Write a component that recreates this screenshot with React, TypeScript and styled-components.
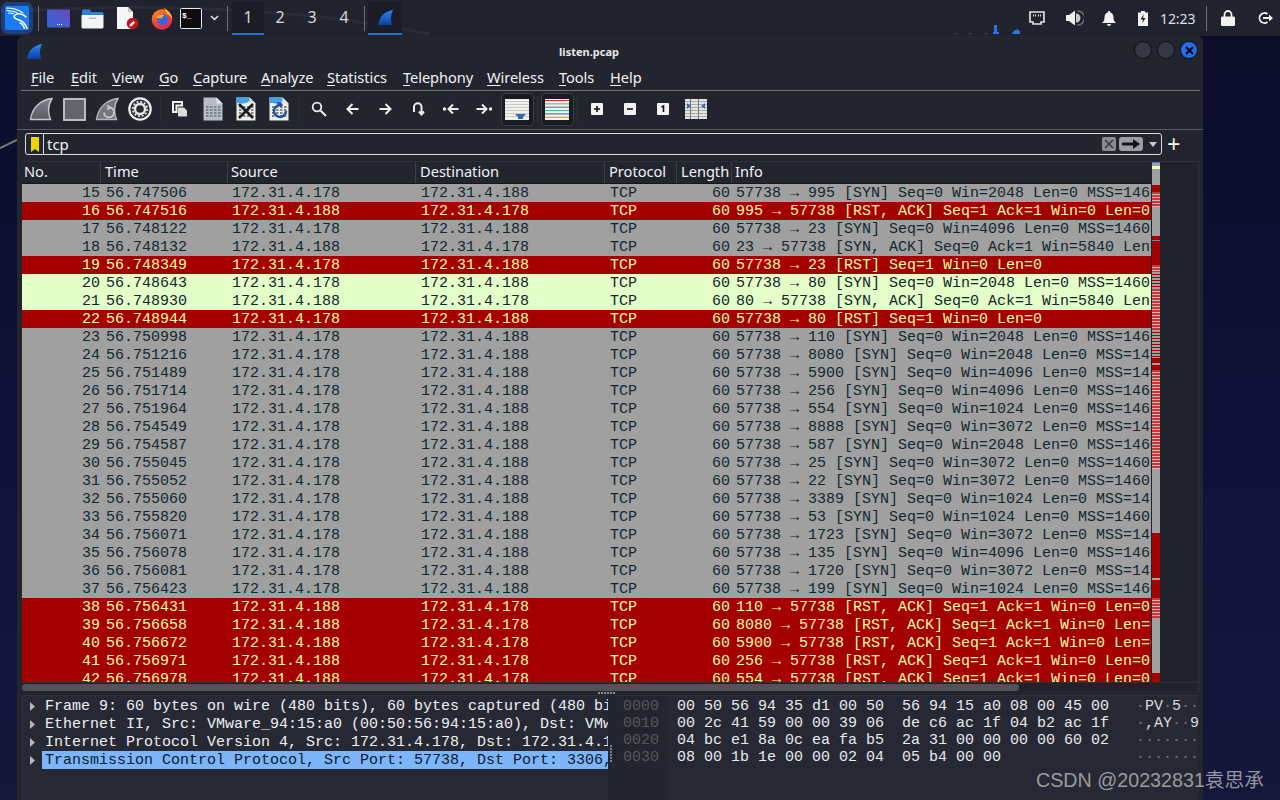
import React from "react";
import styled, { createGlobalStyle } from "styled-components";

const Global = createGlobalStyle`
  html, body { margin: 0; padding: 0; background: #0c0e2c; }
  * { box-sizing: border-box; }
`;
const MONO = `"Liberation Mono", monospace`;
const SANS = `"Noto Sans", sans-serif`;

const Page = styled.div`
  position: relative; width: 1280px; height: 800px; overflow: hidden;
  display: flex; flex-direction: column; font-family: ${SANS};
  background: linear-gradient(180deg, #0b0d28 0%, #10123a 60%, #14163a 100%);
`;
const TopBar = styled.header`
  position: relative; height: 36px; flex: none; display: flex; align-items: center;
  background: #20222e; color: #eef0f4;
`;
const Streak = styled.svg`position: absolute; left: 0; top: 0; pointer-events: none;`;
const Launcher = styled.div`
  position: relative; width: ${p => p.$w}px; height: 34px; flex: none; display: flex; align-items: center; justify-content: center;
`;
const BarSep = styled.div`
  position: relative; width: 1px; height: 25px; background: #6f7279; flex: none; margin: 0 ${p => p.$r}px 0 ${p => p.$l}px;
`;
const Workspace = styled.div`
  position: relative; width: 32px; height: 34px; flex: none; display: flex; align-items: center; justify-content: center;
  font-size: 16px; color: #d5d8de; margin-top: 0;
  background: ${p => (p.$on ? "#1a1c26" : "transparent")};
  border-bottom: 2px solid ${p => (p.$on ? "#2a6fd6" : "transparent")};
`;
const TaskButton = styled(Workspace)`width: 34px;`;
const Spacer = styled.div`flex: 1;`;
const Tray = styled.div`position: relative; width: 28px; height: 34px; display: flex; align-items: center; justify-content: center; flex: none; margin-right: ${p => p.$r ?? 7}px;`;
const Clock = styled.div`position: relative; font-size: 14px; color: #d9e0ea; width: 37px; flex: none; letter-spacing: -.1px;`;
const Net = styled.svg`position: absolute; left: 955px; top: 24px;`;

const Desktop = styled.main`flex: 1; padding-left: 17px; min-height: 0; display: flex;`;
const Win = styled.section`
  width: 1186px; height: 764px; background: #22252e; border-radius: 6px 6px 0 0;
  display: flex; flex-direction: column; color: #eef0f4;
`;
const TitleBar = styled.div`
  position: relative; height: 28px; flex: none; display: flex; align-items: center; justify-content: center;
  font-size: 11px; font-weight: 700; color: #e6e8ec; padding: 2px 42px 0 0;
`;
const TitleIcon = styled.div`position: absolute; left: 9px; top: 7px;`;
const WinButtons = styled.div`position: absolute; right: 5px; top: 5px; display: flex; gap: 5px;`;
const WinBtn = styled.div`
  width: 18px; height: 18px; border-radius: 50%; border: 1px solid #0d0e12;
  background: ${p => (p.$close ? "#1f6ff0" : "#343844")};
  display: flex; align-items: center; justify-content: center;
`;
const MenuBar = styled.nav`
  height: 27px; flex: none; margin: 0 3px 0 4px; border-bottom: 1px solid #70737a; padding-left: 10px;
  display: flex; align-items: center; gap: 0;
`;
const MenuItem = styled.span`font-size: 14.6px; width: ${p => p.$w}px; flex: none; color: #f0f2f5; letter-spacing: -.05px; line-height: 22px;`;
const Mn = styled.span`text-decoration: underline; text-underline-offset: 2px; text-decoration-thickness: 1px;`;
const ToolBar = styled.div`
  height: 38px; flex: none; display: flex; align-items: center; padding: 0 0 2px 7.5px;
  margin: 0 3px 0 0;
`;
const Tool = styled.div`
  width: 33px; height: 33px; flex: none; display: flex; align-items: center; justify-content: center;
  border-radius: 4px; border: ${p => (p.$on ? "1px solid #3b3f4a" : "1px solid transparent")};
  background: ${p => (p.$on ? "#191b22" : "transparent")};
`;
const ToolSep = styled.div`width: 7px; height: 26px; flex: none; display: flex; justify-content: center;
  &::after { content: ""; width: 1px; background: #2c2f38; }
`;
const FilterWrap = styled.div`
  height: 32px; flex: none; border-top: 1px solid #585b63; display: flex; align-items: center; padding: 0 0 3px 8px; gap: 4px;
`;
const Filter = styled.div`
  width: 1137px; height: 22px; border: 1px solid #d8dadf; border-radius: 3px; display: flex; align-items: center; background: #22252e;
`;
const Bookmark = styled.div`width: 18px; height: 20px; border-right: 1px solid #d8dadf; display: flex; align-items: center; justify-content: center; flex: none;`;
const FilterText = styled.div`flex: 1; font-size: 15px; padding-left: 3px; color: #f2f3f5; line-height: 20px;`;
const FilterBtns = styled.div`display: flex; align-items: center; gap: 3px; padding-right: 2px;`;
const ClearBtn = styled.div`width: 14px; height: 14px; border-radius: 2px; background: #8a8d90; display: flex; align-items: center; justify-content: center;`;
const ApplyBtn = styled.div`width: 24px; height: 14px; border-radius: 3px; background: #9a9da3; display: flex; align-items: center; justify-content: center;`;
const Drop = styled.div`width: 13px; display: flex; justify-content: center;`;
const Plus = styled.div`font-size: 23px; line-height: 20px; color: #f0f2f5; margin-left: 1px; font-weight: 400; font-family: "Liberation Sans", sans-serif;`;

const ListFrame = styled.div`
  height: 530px; flex: none; margin: 0 4px 0 5px; display: flex; flex-direction: column;
  background: #1f222b; border-top: 1px solid #2d3039; border-right: 1px solid #2d3039;
`;
const ListMain = styled.div`flex: 1; min-height: 0; display: flex;`;
const ListCol = styled.div`width: 1129px; flex: none; display: flex; flex-direction: column; min-height: 0;`;
const cols = "79px 127px 188px 189px 72px 55px 419px";
const Header = styled.div`
  height: 22px; flex: none; display: grid; grid-template-columns: ${cols}; background: #22252e;
  border-bottom: 1px solid #15171d;
`;
const HeadCell = styled.div`
  font-size: 14.6px; color: #f0f2f5; padding-left: ${p => p.$p}px; border-right: 1px solid #3c3f48; line-height: 19px;
  white-space: nowrap; &:last-child { border-right: 0; }
`;
const Rows = styled.div`flex: 1; min-height: 0; overflow: hidden;`;
const palette = {
  g: { bg: "#a0a0a0", fg: "#12272e" },
  r: { bg: "#a40000", fg: "#fffc9c" },
  l: { bg: "#e4ffc7", fg: "#12272e" },
};
const Row = styled.div`
  height: 18px; display: grid; grid-template-columns: ${cols};
  background: ${p => palette[p.$k].bg}; color: ${p => palette[p.$k].fg};
  font: 15px/19px ${MONO}; white-space: pre;
`;
const Cell = styled.div`
  padding-left: ${p => p.$p ?? 0}px; padding-right: ${p => p.$r ?? 0}px; text-align: ${p => (p.$end ? "right" : "left")}; overflow: hidden;
`;
const MapSvg = styled.svg`flex: none; margin-left: 1px; display: block; margin-top: 0;`;
const HScroll = styled.div`height: 9px; flex: none; display: flex; align-items: center; border-top: 1px solid #2d3039;`;
const HThumb = styled.div`width: 997px; height: 7px; border-radius: 4px; background: #50535a;`;
const Grip = styled.div`
  height: 4px; flex: none; display: flex; justify-content: center; align-items: center; padding-right: 6px;
`;
const GripDots = styled.div`width: 18px; height: 2px; background: repeating-linear-gradient(90deg, #8b8e94 0 2px, transparent 2px 3px);`;
const Bottom = styled.div`flex: 1; min-height: 0; display: flex; margin: 0 4px 0 5px;`;
const Tree = styled.div`
  position: relative; width: 586px; flex: none; border: 1px solid #2d3039; border-width: 1px 0 0 1px; padding-top: 1px; background: #262934;
`;
const TreeRow = styled.div`display: flex; height: 18px; align-items: center;`;
const Twisty = styled.div`width: 19px; flex: none; display: flex; justify-content: center;`;
const TreeText = styled.div`
  width: 566px; height: 18px; padding-left: 3px; overflow: hidden; white-space: pre; font: 15px/19px ${MONO};
  color: ${p => (p.$sel ? "#0e1a2a" : "#eef0f4")}; background: ${p => (p.$sel ? "#7cb5f9" : "transparent")};
`;
const VSplit = styled.div`width: 5px; flex: none; display: flex; justify-content: center; padding-top: 50px;`;
const VDots = styled.div`width: 2px; height: 17px; background: repeating-linear-gradient(180deg, #7f828a 0 2px, transparent 2px 3px);`;
const Hex = styled.div`
  flex: 1; min-width: 0; display: flex; border-top: 1px solid #2d3039; background: #262934; font: 15px/17px ${MONO}; white-space: pre; overflow: hidden; padding-left: 0;
`;
const Offsets = styled.div`width: 55px; flex: none; background: #22252e; color: #54575e; padding: 2px 0 0 10px;`;
const Bytes = styled.div`width: 468px; flex: none; padding: 2px 0 0 9px; color: #e8eaee;`;
const Ascii = styled.div`flex: 1; padding-top: 2px; color: #d8dade; overflow: hidden;`;
const Dim = styled.span`color: #6d7078;`;
const Mark = styled.div`
  position: absolute; left: 1036px; top: 766px; font: 19.7px/28px "Liberation Sans", "Noto Sans CJK SC", sans-serif; color: rgba(200,200,200,.72); white-space: nowrap;
`;
const Wall = styled.svg`position: absolute; left: 0; top: 36px;`;

const Fin = ({ s = 24, a = "#2f86ee", b = "#0b3f9e", edge = "none" }: any) => {
  const id = `f${a.slice(1)}`;
  return (
    <svg width={s} height={s} viewBox="0 0 24 24">
      <defs><linearGradient id={id} x1="0" y1="0" x2="0" y2="1"><stop offset="0" stopColor={a} /><stop offset="1" stopColor={b} /></linearGradient></defs>
      <path d="M1.500 22.500C3 11 11 3 23 1.500 19.500 7 18.500 15 21.500 22.500Z" fill={`url(#${id})`} stroke={edge} strokeWidth="1.400" />
    </svg>
  );
};
const Kali = () => (
  <svg width="34" height="34" viewBox="0 0 34 34">
    <rect x="1" y="1" width="32" height="32" rx="7" fill="#1b6ee8" opacity=".4" />
    <rect x="5" y="5" width="24" height="24" rx="2" fill="#1a7bf5" />
    <path d="M6.500 7C12 7 19 9 23 12M7 9.500c3 .2 7 .8 10 2M8.500 12c2 0 3.500.2 5 .8" fill="none" stroke="#fff" strokeWidth="1.100" strokeLinecap="round" />
    <path d="M26 16C23 12.500 18 12 15 14c-2 1.500-.5 3.500 2 4.200 4.500 1 8 3 10 9.300M20 22c2 .6 3.500 2.500 4.300 5.300" fill="none" stroke="#fff" strokeWidth="1.500" strokeLinecap="round" />
  </svg>
);
const ShowDesk = () => (
  <svg width="23" height="19" viewBox="0 0 23 19">
    <defs><linearGradient id="sd" x1="0" y1="1" x2="1" y2="0"><stop offset="0" stopColor="#2f66e0" /><stop offset="1" stopColor="#6a4bb8" /></linearGradient></defs>
    <rect width="23" height="18" y=".5" rx="1" fill="url(#sd)" />
    <path d="M10 15h1v1h-1zM12 15h1v1h-1zM14 15h1v1h-1z" fill="#fff" />
  </svg>
);
const Folder = () => (
  <svg width="23" height="21" viewBox="0 0 23 21">
    <path d="M1 3a1.500 1.500 0 0 1 1.500-1.500h6l2 2.500H21a1.500 1.500 0 0 1 1.500 1.500V7H1z" fill="#2d7fe0" />
    <path d="M.5 7h22v12a1.500 1.500 0 0 1-1.500 1.500H2A1.500 1.500 0 0 1 .5 19z" fill="#f4f4f4" />
    <rect x="8" y="9.500" width="7" height="1.500" fill="#bbb" />
  </svg>
);
const DocBad = () => (
  <svg width="24" height="24" viewBox="0 0 24 24">
    <path d="M2 1h11l5 5v17H2z" fill="#f6f6f6" />
    <path d="M13 1v5h5z" fill="#c8c8c8" />
    <circle cx="17.500" cy="17.500" r="5.800" fill="#c8141c" />
    <path d="M14.500 20.500l.6-2.200 3.400-3.400 1.600 1.600-3.400 3.400z" fill="#fff" />
  </svg>
);
const Firefox = () => (
  <svg width="22" height="23" viewBox="0 0 22 23">
    <defs><linearGradient id="ff" x1="0" y1="0" x2=".6" y2="1"><stop offset="0" stopColor="#ff9a2a" /><stop offset=".55" stopColor="#f0472f" /><stop offset="1" stopColor="#d92b55" /></linearGradient></defs>
    <circle cx="11" cy="12.500" r="10.300" fill="url(#ff)" />
    <path d="M12 .8c4.500 2 9 6 9.300 11.700-1-2.500-3-4.700-5.300-5.500C16 5 14.500 3 12 .8z" fill="#ffc52e" />
    <circle cx="11.500" cy="12.500" r="5.500" fill="#3566e6" />
    <path d="M5 9.500C7 8 10.500 7 13 8l-2 3.200H6.500z" fill="#ffa51e" />
  </svg>
);
const Term = () => (
  <svg width="22" height="21" viewBox="0 0 22 21">
    <rect x=".5" y=".5" width="21" height="20" rx="1" fill="#0c0c10" stroke="#e8e8e8" />
    <text x="2" y="10" fill="#fff" fontSize="8" fontWeight="700" fontFamily="Liberation Mono, monospace">$_</text>
  </svg>
);
const Chevron = () => (
  <svg width="9" height="6" viewBox="0 0 9 6"><path d="M1 1l3.500 3.500L8 1" fill="none" stroke="#e8e8e8" strokeWidth="1.500" /></svg>
);
const NetPort = () => (
  <svg width="16" height="14" viewBox="0 0 16 14"><path d="M1 1h14v10h-3v2H4v-2H1z" fill="none" stroke="#e6e6e6" strokeWidth="1.600" /><path d="M4 3.500h1v2H4zM6 3.500h1v2H6zM9 3.500h1v2H9zM11 3.500h1v2h-1z" fill="#e6e6e6" /></svg>
);
const Speaker = () => (
  <svg width="18" height="16" viewBox="0 0 18 16"><path d="M0 5h3l6-4.500v15L3 11H0z" fill="#f0f0f0" /><path d="M10 3.500a4.500 4.500 0 0 1 0 9z" fill="#c9c9c9" /><path d="M11.500 1a7 7 0 0 1 0 14" fill="none" stroke="#777" strokeWidth="1.300" /></svg>
);
const Bell = () => (
  <svg width="14" height="15" viewBox="0 0 14 15"><path d="M7 0a1 1 0 0 1 1 1.300C10.500 2 11.500 4 11.500 6.500c0 3 1 4 2.500 5.500H0c1.500-1.500 2.500-2.500 2.500-5.500C2.500 4 3.500 2 6 1.300A1 1 0 0 1 7 0z" fill="#f0f0f0" /><path d="M5 13h4a2 2 0 0 1-4 0z" fill="#f0f0f0" /></svg>
);
const Battery = () => (
  <svg width="10" height="15" viewBox="0 0 10 15"><path d="M3 0h4v1.500h3V15H0V1.500h3z" fill="#f2f2f2" /><path d="M6 3L2.500 8.500H5L4 12.500 7.500 7H5z" fill="#20222e" /></svg>
);
const Lock = () => (
  <svg width="14" height="16" viewBox="0 0 14 16"><path d="M3.500 7V4.500a3.500 3.500 0 0 1 7 0V7" fill="none" stroke="#f2f2f2" strokeWidth="1.800" /><rect y="6.500" width="14" height="9.500" rx="1.200" fill="#f2f2f2" /></svg>
);
const Logout = () => (
  <svg width="16" height="14" viewBox="0 0 16 14"><path d="M10.500 3A5 5 0 1 0 10.500 11" fill="none" stroke="#f0f0f0" strokeWidth="1.800" /><path d="M6 6h6V3.500L16 7l-4 3.500V8H6z" fill="#f0f0f0" /></svg>
);

const Gear = () => (
  <svg width="24" height="24" viewBox="0 0 24 24">
    <circle cx="12" cy="12" r="10.700" fill="#2a2c34" stroke="#eceded" strokeWidth="2.200" />
    <circle cx="12" cy="12" r="5" fill="none" stroke="#e6e7e9" strokeWidth="2.400" />
    <circle cx="12" cy="12" r="7.200" fill="none" stroke="#e6e7e9" strokeWidth="1.800" strokeDasharray="2 1.770" />
  </svg>
);
const OpenIcon = () => (
  <svg width="16" height="16" viewBox="0 0 16 16">
    <path d="M1 1h9v3.500H4.500V11H1z" fill="none" stroke="#f2f2f2" strokeWidth="2" />
    <path d="M6 6.500h6l3 3V15.500H6z" fill="#dcdcdc" />
  </svg>
);
const FileBase = ({ children, fill = "#b7bcc6", blue = false }: any) => (
  <svg width="20" height="24" viewBox="0 0 20 24">
    <path d="M.5.500h13l6 6v17H.5z" fill={fill} />
    {blue && <path d="M.5.500h13l3 3c-4 0-5 3-9 3-3 0-5-1-7 0z" fill="#45a0e8" />}
    <path d="M13.500.500v6h6z" fill="#e2e4e8" />
    <g fill="#7e838d">{[9, 12, 15, 18].map(y => [3, 7, 11, 15].map(x => <rect key={`${x}${y}`} x={x} y={y} width="2.500" height="2" />))}</g>
    {children}
  </svg>
);
const Mag = () => (<svg width="16" height="16" viewBox="0 0 16 16"><circle cx="6" cy="6" r="4.300" fill="none" stroke="#eee" strokeWidth="1.800" /><path d="M9.500 9.500L15 15" stroke="#eee" strokeWidth="2" /></svg>);
const ArrowL = () => (<svg width="13" height="12" viewBox="0 0 13 12"><path d="M12.500 6H2M6.500 1L1.500 6l5 5" fill="none" stroke="#eee" strokeWidth="2" /></svg>);
const ArrowR = () => (<svg width="13" height="12" viewBox="0 0 13 12"><path d="M.5 6H11M6.500 1l5 5-5 5" fill="none" stroke="#eee" strokeWidth="2" /></svg>);
const Jump = () => (<svg width="13" height="14" viewBox="0 0 13 14"><path d="M2 10V5a3.500 3.500 0 0 1 7.500 0v7M7 9.500l2.500 3 2.500-3" fill="none" stroke="#eee" strokeWidth="2" /></svg>);
const FirstI = () => (<svg width="16" height="12" viewBox="0 0 16 12"><circle cx="1.500" cy="6" r="1.700" fill="#eee" /><path d="M15.500 6H6M10 1.500L5.500 6l4.500 4.500" fill="none" stroke="#eee" strokeWidth="2" /></svg>);
const LastI = () => (<svg width="16" height="12" viewBox="0 0 16 12"><circle cx="14.500" cy="6" r="1.700" fill="#eee" /><path d="M.5 6H10M6 1.500l4.500 4.500L6 10.500" fill="none" stroke="#eee" strokeWidth="2" /></svg>);
const Lines = ({ colors }: { colors: string[] }) => (
  <svg width="24" height="21" viewBox="0 0 24 21"><rect width="24" height="21" fill="#f2f2f0" />{colors.map((c, i) => <rect key={i} y={1 + i * 3.350} width="24" height="1" fill={c} />)}</svg>
);
const Zoom = ({ k }: { k: string }) => (
  <svg width="12" height="12" viewBox="0 0 12 12"><rect width="12" height="12" rx="1" fill="#f2f2f2" />
    {k === "+" && <path d="M3 6h6M6 3v6" stroke="#111" strokeWidth="1.600" />}
    {k === "-" && <path d="M3 6h6" stroke="#111" strokeWidth="1.600" />}
    {k === "1" && <path d="M4.500 4L6.500 3V9" fill="none" stroke="#111" strokeWidth="1.600" />}
  </svg>
);
const Resize = () => (
  <svg width="22" height="20" viewBox="0 0 22 20"><rect width="22" height="20" fill="#e4e4e0" />
    {[2, 5, 8, 11, 14, 17].map(y => <rect key={y} y={y} width="22" height=".8" fill="#9a9a98" />)}
    <path d="M5.500 0v20M13.500 0v20" stroke="#777" strokeWidth="1" />
    <path d="M2 4l4 3-4 3zM20 4l-4 3 4 3z" fill="#3a6fb5" />
  </svg>
);

const seg: [number, number, string][] = [
  [0, 1, "b"], [1, 4, "g"], [4, 7, "y"], [7, 23, "g"], [23, 30, "r"], [30, 45, "s"], [45, 74, "g"], [74, 78, "r"], [78, 79, "b2"],
  [79, 103, "r"], [103, 110, "s"], [110, 127, "m"], [127, 133, "s"], [133, 168, "s"], [168, 196, "m"], [196, 201, "r"], [201, 203, "g"], [203, 208, "r"],
  [208, 307, "s"], [307, 371, "g"], [371, 416, "r"], [416, 418, "g"], [418, 436, "r"], [436, 456, "s"], [456, 511, "g"], [511, 520, "r"],
];
const mapColor: Record<string, string> = { b: "#3c7fe0", b2: "#6a8aa8", g: "#a0a0a0", y: "#e4ffc7", r: "#a40000" };
const ScrollMap = () => (
  <MapSvg width="8" height="521" viewBox="0 0 8 521">
    {seg.map(([a, b, k]) => {
      if (k === "s" || k === "m") {
        const out = [];
        for (let y = a; y < b; y += 3) {
          out.push(<rect key={y} y={y} width="8" height="2" fill={k === "s" ? "#c23a3a" : "#a0a0a0"} />);
          out.push(<rect key={`${y}w`} y={y + 2} width="8" height="1" fill={k === "s" ? "#e6b0b0" : "#a40000"} />);
        }
        return out;
      }
      return <rect key={a} y={a} width="8" height={b - a} fill={mapColor[k]} />;
    })}
  </MapSvg>
);

const A = "172.31.4.178";
const B = "172.31.4.188";
const syn = (p: number, w: number) => `57738 → ${p} [SYN] Seq=0 Win=${w} Len=0 MSS=1460`;
const rstAck = (p: number) => `${p} → 57738 [RST, ACK] Seq=1 Ack=1 Win=0 Len=0`;
const data: [number, string, string, string, string, string][] = [
  [15, "56.747506", A, B, syn(995, 2048), "g"],
  [16, "56.747516", B, A, rstAck(995), "r"],
  [17, "56.748122", A, B, syn(23, 4096), "g"],
  [18, "56.748132", B, A, "23 → 57738 [SYN, ACK] Seq=0 Ack=1 Win=5840 Len=0 MSS=1460", "g"],
  [19, "56.748349", A, B, "57738 → 23 [RST] Seq=1 Win=0 Len=0", "r"],
  [20, "56.748643", A, B, syn(80, 2048), "l"],
  [21, "56.748930", B, A, "80 → 57738 [SYN, ACK] Seq=0 Ack=1 Win=5840 Len=0 MSS=1460", "l"],
  [22, "56.748944", A, B, "57738 → 80 [RST] Seq=1 Win=0 Len=0", "r"],
  [23, "56.750998", A, B, syn(110, 2048), "g"],
  [24, "56.751216", A, B, syn(8080, 2048), "g"],
  [25, "56.751489", A, B, syn(5900, 4096), "g"],
  [26, "56.751714", A, B, syn(256, 4096), "g"],
  [27, "56.751964", A, B, syn(554, 1024), "g"],
  [28, "56.754549", A, B, syn(8888, 3072), "g"],
  [29, "56.754587", A, B, syn(587, 2048), "g"],
  [30, "56.755045", A, B, syn(25, 3072), "g"],
  [31, "56.755052", A, B, syn(22, 3072), "g"],
  [32, "56.755060", A, B, syn(3389, 1024), "g"],
  [33, "56.755820", A, B, syn(53, 1024), "g"],
  [34, "56.756071", A, B, syn(1723, 3072), "g"],
  [35, "56.756078", A, B, syn(135, 4096), "g"],
  [36, "56.756081", A, B, syn(1720, 3072), "g"],
  [37, "56.756423", A, B, syn(199, 1024), "g"],
  [38, "56.756431", B, A, rstAck(110), "r"],
  [39, "56.756658", B, A, rstAck(8080), "r"],
  [40, "56.756672", B, A, rstAck(5900), "r"],
  [41, "56.756971", B, A, rstAck(256), "r"],
  [42, "56.756978", B, A, rstAck(554), "r"],
];
const menus: [string, string, number][] = [
  ["F", "ile", 40], ["E", "dit", 41], ["V", "iew", 47], ["G", "o", 34], ["C", "apture", 68], ["A", "nalyze", 66],
  ["S", "tatistics", 76], ["T", "elephony", 84], ["W", "ireless", 72], ["T", "ools", 51], ["H", "elp", 40],
];
const tree = [
  "Frame 9: 60 bytes on wire (480 bits), 60 bytes captured (480 bits)",
  "Ethernet II, Src: VMware_94:15:a0 (00:50:56:94:15:a0), Dst: VMware_94:35:d1",
  "Internet Protocol Version 4, Src: 172.31.4.178, Dst: 172.31.4.188",
  "Transmission Control Protocol, Src Port: 57738, Dst Port: 3306, Seq: 0",
];

export default function App() {
  return (
    <Page>
      <Global />
      <TopBar>
        <Streak width="1280" height="36"><path d="M0 12C150 2 300 8 430 34" fill="none" stroke="rgba(255,255,255,.045)" strokeWidth="3" /></Streak>
        <Launcher $w={34}><Kali /></Launcher>
        <BarSep $l={4} $r={3} />
        <Launcher $w={33}><ShowDesk /></Launcher>
        <Launcher $w={34}><Folder /></Launcher>
        <Launcher $w={35}><DocBad /></Launcher>
        <Launcher $w={35}><Firefox /></Launcher>
        <Launcher $w={24}><Term /></Launcher>
        <Launcher $w={23}><Chevron /></Launcher>
        <BarSep $l={1} $r={4} />
        <Workspace $on>1</Workspace>
        <Workspace>2</Workspace>
        <Workspace>3</Workspace>
        <Workspace>4</Workspace>
        <BarSep $l={4} $r={3} />
        <TaskButton $on><Fin s={17} /></TaskButton>
        <Net width="70" height="10" viewBox="0 0 70 10"><path d="M0 9h1v1H0zM15 9h1v1h-1zM31 9h1v1h-1zM38 8h1V1h3v7h2v2h-6zM57 9l3-3h2v-2l2 3h1v3h-8z" fill="#2a72e0" /></Net>
        <Spacer />
        <Tray $r={10}><NetPort /></Tray>
        <Tray $r={6}><Speaker /></Tray>
        <Tray $r={6}><Bell /></Tray>
        <Tray $r={3}><Battery /></Tray>
        <Clock>12:23</Clock>
        <BarSep $l={9} $r={7} />
        <Tray $r={9}><Lock /></Tray>
        <Tray $r={1}><Logout /></Tray>
      </TopBar>
      <Wall width="17" height="200"><path d="M0 112L17 104" stroke="#777a82" strokeWidth="2" /></Wall>
      <Desktop>
        <Win>
          <TitleBar>
            <TitleIcon><Fin s={17} /></TitleIcon>
            listen.pcap
            <WinButtons>
              <WinBtn />
              <WinBtn />
              <WinBtn $close>
                <svg width="9" height="9" viewBox="0 0 9 9"><path d="M1 1l7 7M8 1l-7 7" stroke="#050505" strokeWidth="2" /></svg>
              </WinBtn>
            </WinButtons>
          </TitleBar>
          <MenuBar>
            {menus.map(([m, r, w]) => <MenuItem key={m + r} $w={w}><Mn>{m}</Mn>{r}</MenuItem>)}
          </MenuBar>
          <ToolBar>
            <Tool><Fin s={24} a="#7d808a" b="#5a5d66" edge="#c4c6cb" /></Tool>
            <Tool><svg width="23" height="23" viewBox="0 0 23 23"><rect x="1" y="1" width="21" height="21" fill="#62656e" stroke="#b9bcc3" strokeWidth="2" /></svg></Tool>
            <Tool>
              <svg width="24" height="24" viewBox="0 0 24 24"><path d="M1.500 22.500C3 11 11 3 23 1.500 19.500 7 18.500 15 21.500 22.500Z" fill="#74777f" stroke="#b0b3b9" strokeWidth="1.400" /><path d="M15 10.500a5 5 0 1 1-6 5M12 8.500l3 2-3 2" fill="none" stroke="#c9ccd1" strokeWidth="1.800" /></svg>
            </Tool>
            <Tool><Gear /></Tool>
            <ToolSep />
            <Tool><OpenIcon /></Tool>
            <Tool><FileBase /></Tool>
            <Tool><FileBase fill="#eef0e2" blue><path d="M3 7l14 14M17 7L3 21" stroke="#1a1c22" strokeWidth="2.500" /></FileBase></Tool>
            <Tool><FileBase fill="#eef0e2" blue><path d="M13.500 8.500a6 6 0 1 0 3.500 5.500" fill="none" stroke="#1f4fa8" strokeWidth="2.400" /><path d="M7 5l6 0.500-1.500 5z" fill="#1f4fa8" /></FileBase></Tool>
            <ToolSep />
            <Tool><Mag /></Tool>
            <Tool><ArrowL /></Tool>
            <Tool><ArrowR /></Tool>
            <Tool><Jump /></Tool>
            <Tool><FirstI /></Tool>
            <Tool><LastI /></Tool>
            <Tool $on>
              <svg width="24" height="21" viewBox="0 0 24 21"><rect width="24" height="21" fill="#f0f0ee" />{[2, 5, 8, 11, 14, 17].map(y => <rect key={y} y={y} width="24" height="1" fill="#c8c8c6" />)}<path d="M10 15h11l-3 3v2h-5v-2z" fill="#2f68b8" /></svg>
            </Tool>
            <ToolSep />
            <Tool $on><Lines colors={["#d0342c", "#7fb030", "#3a6fc0", "#3ab0a0", "#2a5fb8", "#c8a010"]} /></Tool>
            <ToolSep />
            <Tool><Zoom k="+" /></Tool>
            <Tool><Zoom k="-" /></Tool>
            <Tool><Zoom k="1" /></Tool>
            <Tool><Resize /></Tool>
          </ToolBar>
          <FilterWrap>
            <Filter>
              <Bookmark><svg width="8" height="15" viewBox="0 0 8 15"><path d="M0 0h8v15l-4-3-4 3z" fill="#f0d400" /></svg></Bookmark>
              <FilterText>tcp</FilterText>
              <FilterBtns>
                <ClearBtn><svg width="10" height="10" viewBox="0 0 10 10"><path d="M1 1l8 8M9 1l-8 8" stroke="#2a2c30" strokeWidth="1.200" /></svg></ClearBtn>
                <ApplyBtn><svg width="20" height="10" viewBox="0 0 20 10"><path d="M1 3.500h11V0l7 5-7 5V6.500H1z" fill="#14161c" /></svg></ApplyBtn>
                <Drop><svg width="8" height="5" viewBox="0 0 8 5"><path d="M0 0h8L4 5z" fill="#c8cad0" /></svg></Drop>
              </FilterBtns>
            </Filter>
            <Plus>+</Plus>
          </FilterWrap>
          <ListFrame>
            <ListMain>
              <ListCol>
                <Header>
                  <HeadCell $p={2}>No.</HeadCell>
                  <HeadCell $p={4}>Time</HeadCell>
                  <HeadCell $p={3}>Source</HeadCell>
                  <HeadCell $p={4}>Destination</HeadCell>
                  <HeadCell $p={4}>Protocol</HeadCell>
                  <HeadCell $p={4}>Length</HeadCell>
                  <HeadCell $p={3}>Info</HeadCell>
                </Header>
                <Rows>
                  {data.map(([n, t, s, d, i, k]) => (
                    <Row key={n} $k={k}>
                      <Cell $end $r={1}>{n}</Cell>
                      <Cell $p={5}>{t}</Cell>
                      <Cell $p={4}>{s}</Cell>
                      <Cell $p={5}>{d}</Cell>
                      <Cell $p={5}>TCP</Cell>
                      <Cell $end $r={2}>60</Cell>
                      <Cell $p={4}>{i}</Cell>
                    </Row>
                  ))}
                </Rows>
              </ListCol>
              <ScrollMap />
            </ListMain>
            <HScroll><HThumb /></HScroll>
          </ListFrame>
          <Grip><GripDots /></Grip>
          <Bottom>
            <Tree>
              {tree.map((t, i) => (
                <TreeRow key={i}>
                  <Twisty><svg width="5" height="9" viewBox="0 0 5 9"><path d="M0 0l5 4.500L0 9z" fill="#b4b7bd" /></svg></Twisty>
                  <TreeText $sel={i === 3}>{t}</TreeText>
                </TreeRow>
              ))}
            </Tree>
            <VSplit><VDots /></VSplit>
            <Hex>
              <Offsets>{"0000\n0010\n0020\n0030"}</Offsets>
              <Bytes>{"00 50 56 94 35 d1 00 50  56 94 15 a0 08 00 45 00\n00 2c 41 59 00 00 39 06  de c6 ac 1f 04 b2 ac 1f\n04 bc e1 8a 0c ea fa b5  2a 31 00 00 00 00 60 02\n08 00 1b 1e 00 00 02 04  05 b4 00 00"}</Bytes>
              <Ascii>
                <Dim>·</Dim>PV<Dim>·</Dim>5<Dim>··</Dim>{"\n"}
                <Dim>·</Dim>,AY<Dim>··</Dim>9{"\n"}
                <Dim>·······</Dim>{"\n"}
                <Dim>·······</Dim>
              </Ascii>
            </Hex>
          </Bottom>
        </Win>
      </Desktop>
      <Mark>CSDN @20232831袁思承</Mark>
    </Page>
  );
}
